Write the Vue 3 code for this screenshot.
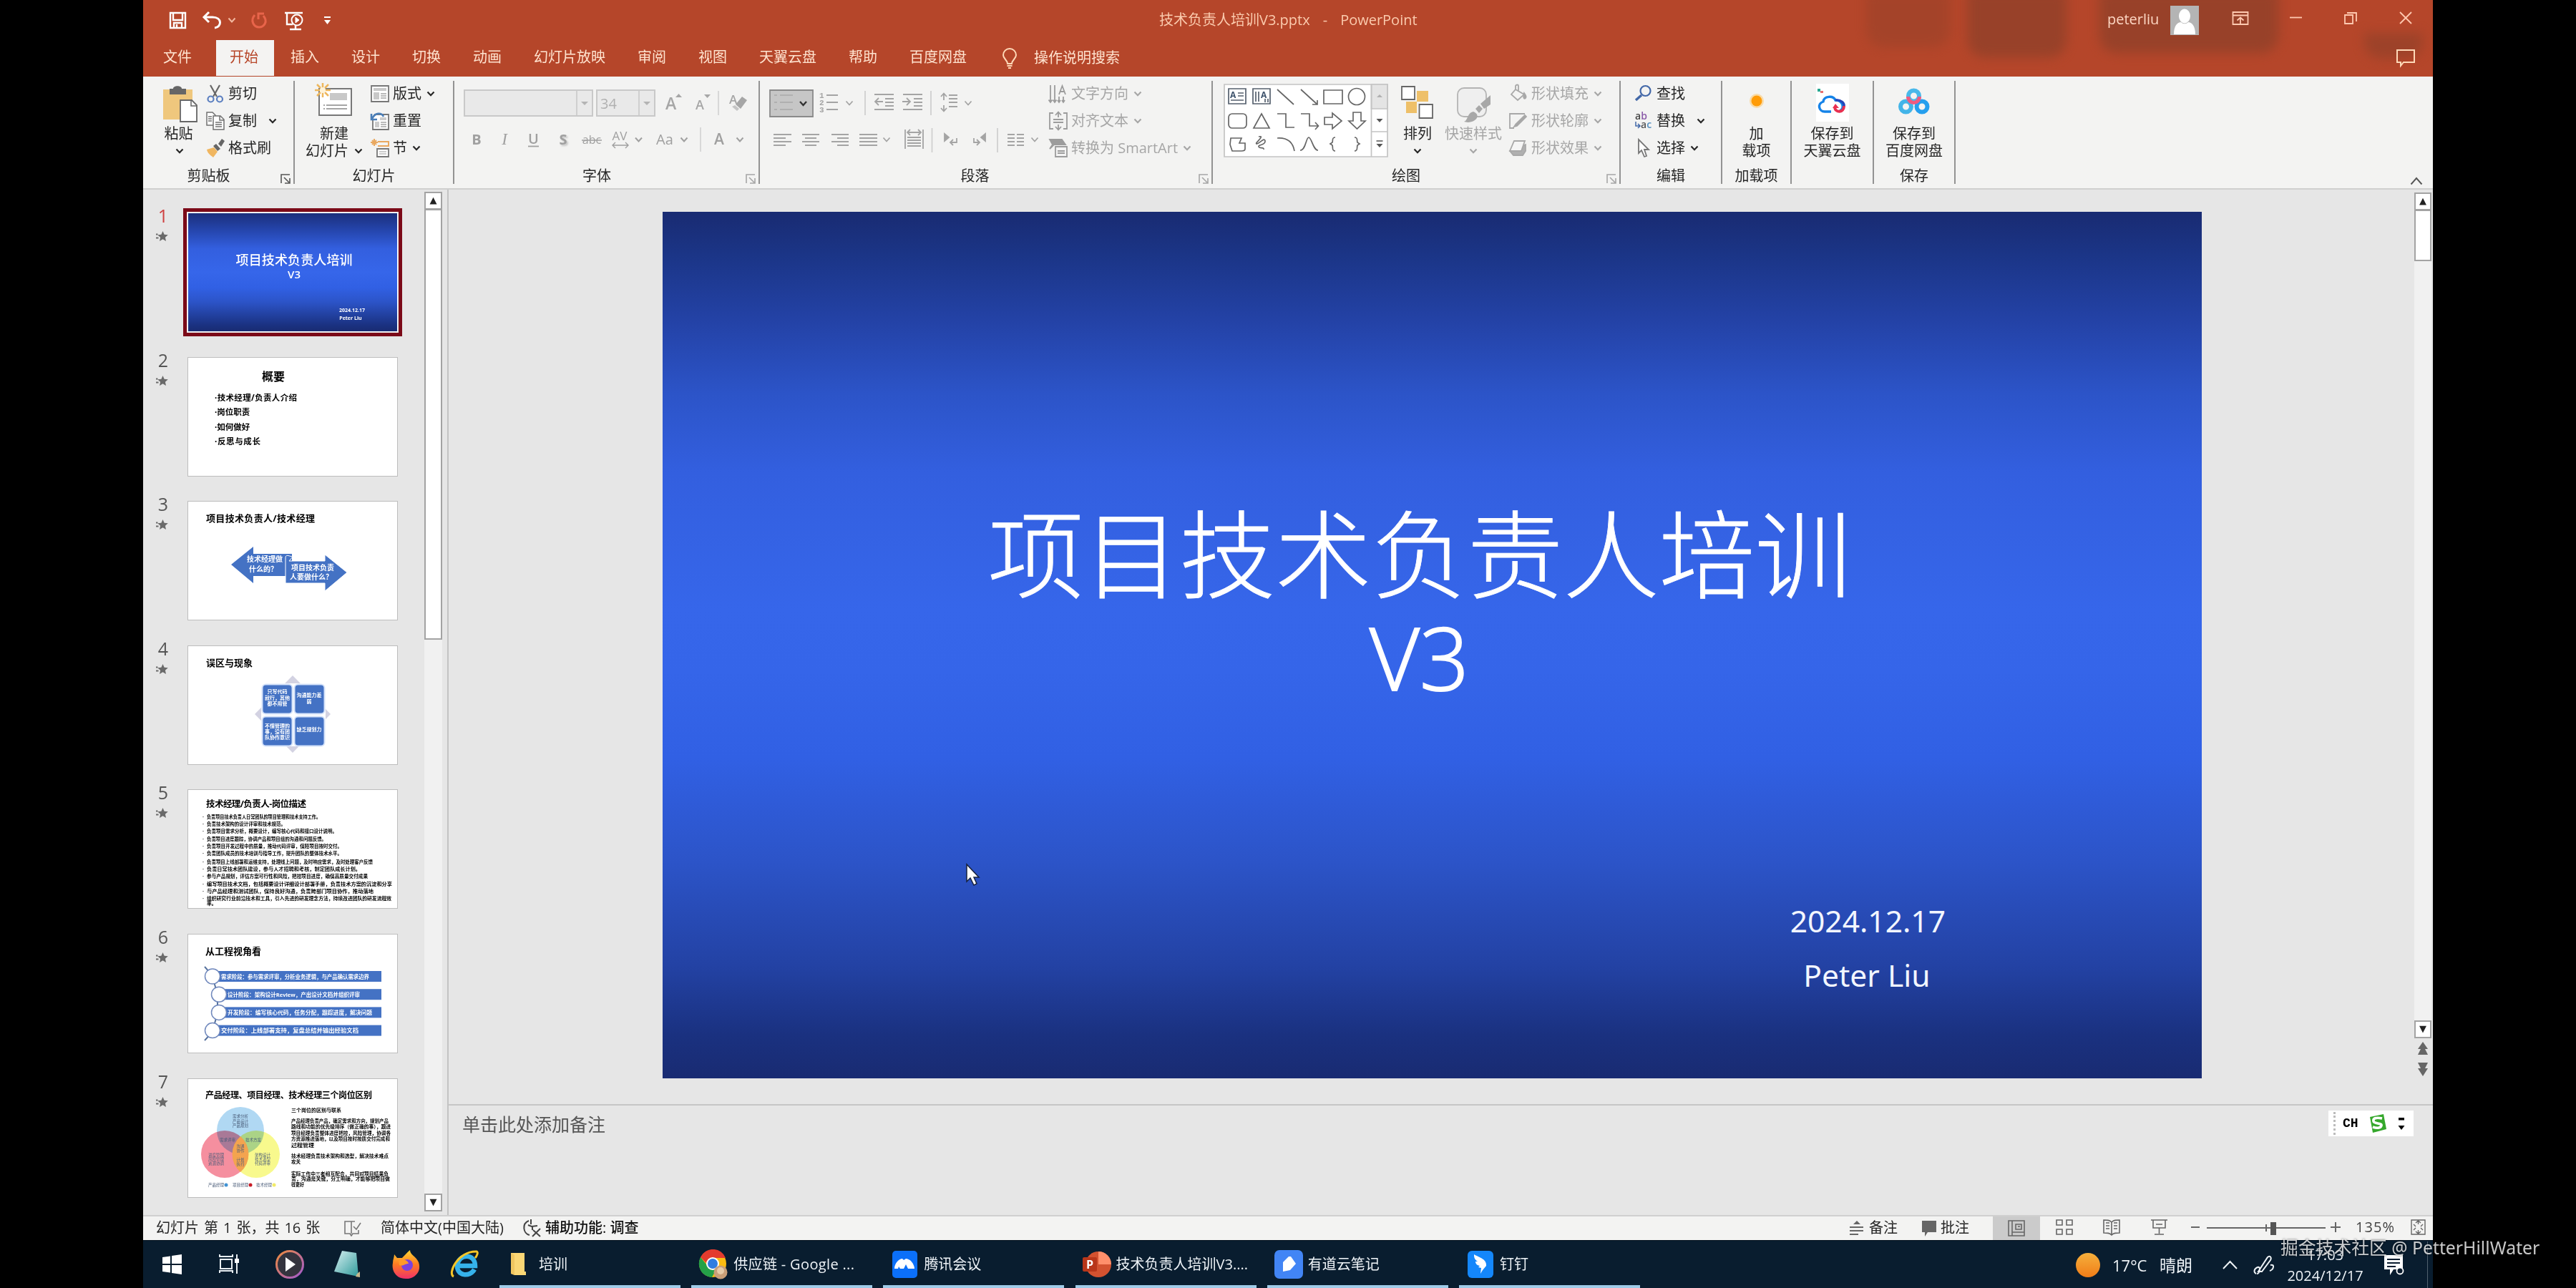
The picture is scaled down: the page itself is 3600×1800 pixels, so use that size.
<script setup>
import { h } from 'vue'

const Chev = () =>
  h('svg', { viewBox: '0 0 12 12', width: 12, height: 12, fill: 'none', stroke: 'currentColor', 'stroke-width': 2.2 }, [
    h('path', { d: 'M1.5 3.5 6 8.2 10.5 3.5' })
  ])
const Launcher = () =>
  h('svg', { viewBox: '0 0 14 14', width: 14, height: 14, fill: 'none', stroke: 'currentColor', 'stroke-width': 1.6 }, [
    h('path', { d: 'M1 13V1h12M5 5l7 7M13 6v7H6' })
  ])

const tabs = ['插入', '设计', '切换', '动画', '幻灯片放映', '审阅', '视图', '天翼云盘', '帮助', '百度网盘']

const duties = [
  ['负责项目技术负责人日常团队的项目管理和技术支持工作。', 159],
  ['负责技术架构的设计评审和技术规范。', 110],
  ['负责项目需求分析，概要设计，编写核心代码和接口设计说明。', 182],
  ['负责项目进度跟踪，协调产品和项目组的沟通和问题反馈。', 167],
  ['负责项目开发过程中的质量，推动代码评审，保障项目按时交付。', 189],
  ['负责团队成员的技术培训与指导工作，提升团队的整体技术水平。', 189],
  ['负责项目上线部署和运维支持，处理线上问题，及时响应需求，及时处理客户反馈', 232],
  ['负责日常技术团队建设，参与人才招聘和考核，制定团队成长计划。', 215],
  ['参与产品规划，评估方案可行性和风险，把控项目进度，确保高质量交付成果', 225],
  ['编写项目技术文档，包括概要设计详细设计部署手册，负责技术方案的沉淀和分享', 259],
  ['与产品经理和测试团队，保持良好沟通，负责跨部门项目协作，推动落地', 233],
  ['组织研究行业前沿技术和工具，引入先进的研发理念方法，持续改进团队的研发流程效', 258]
]
const dutyY = [37.5, 47.5, 58, 69, 79, 89, 100.5, 110.5, 120.5, 132, 142, 152]

const stages = [
  { x: 33, cx: 34, t: '需求阶段：参与需求评审，分析业务逻辑，与产品确认需求边界', w: 207 },
  { x: 43, cx: 43, t: '设计阶段：架构设计Review，产出设计文档并组织评审', w: 185 },
  { x: 43, cx: 43, t: '开发阶段：编写核心代码，任务分配，跟踪进度，解决问题', w: 202 },
  { x: 33, cx: 34, t: '交付阶段：上线部署支持，复盘总结并输出经验文档', w: 192 }
]

const roleText = [
  ['三个岗位的区别与联系', 43, 70], ['产品经理负责产品，确定需求和方向，规划产品', 58, 136],
  ['路线和功能的优先级排序（做正确的事），跟进', 66, 139], ['项目经理负责整体进度把控，风险管理，协调各', 74.5, 139],
  ['方资源推进落地，以及项目按时按质交付完成和', 83, 138], ['过程管理', 91.5, 32],
  ['技术经理负责技术架构和选型，解决技术难点', 106.5, 136], ['攻关', 115, 13],
  ['实际工作中三者相互配合，共同对项目结果负', 131.5, 136], ['责，沟通是关键，分工明确，才能够把项目做', 138.5, 138], ['得更好', 147, 18]
]

const tasks = [
  { k: 'folder', t: '培训' },
  { k: 'chrome', t: '供应链 - Google ...' },
  { k: 'meet', t: '腾讯会议' },
  { k: 'ppt', t: '技术负责人培训V3....' },
  { k: 'note', t: '有道云笔记' },
  { k: 'ding', t: '钉钉' }
]
</script>

<template>
  <div class="screen">
    <div class="window">
      <header class="top">
        <i class="blot b1"></i><i class="blot b2"></i><i class="blot b3"></i><i class="blot b4"></i>
        <div class="titlebar">
          <svg class="quick" width="240" height="50" viewBox="230 4 240 50" fill="none" stroke="#fff" stroke-width="2.4">
            <path d="M238 18h21v21h-21zM242 18v10h13V18M243 39v-7h11v7M247 39v-5" />
            <path d="M292 17l-7 7 7 7M286 24h11c14 0 13 14 3 15" stroke-width="3" />
            <path d="M319.500 25.500l4.500 5 4.500-5" stroke="#f3b9a0" stroke-width="2" />
            <path d="M356 21c-7 8-1 17 6 17s13-8 6-16M369 19h-8v8" stroke="#e8644a" stroke-width="3" />
            <path d="M398 18h25M401 18v16h8M405 41h16M413 36v5" />
            <circle cx="415" cy="28" r="7.500" stroke-width="2" /><path d="M413 24l5 4-5 4z" fill="#fff" stroke-width="1" />
            <path d="M453 24h9" stroke-width="2" /><path d="M453 28h9l-4.500 6z" fill="#fff" stroke="none" />
          </svg>
          <div class="doc"><span>技术负责人培训V3.pptx</span><span>-</span><span>PowerPoint</span></div>
          <span class="user">peterliu</span>
          <svg class="avatar" width="40" height="41" viewBox="0 0 40 41"><path fill="#b4b4b4" d="M0 0h40v41H0z" /><ellipse cx="20" cy="14.500" rx="8" ry="10" fill="#fff" /><path fill="#fff" d="M5 40c0-12 5-17 10-17 3 3 7 3 10 0 5 0 10 5 10 17z" /></svg>
          <svg class="winbtns" width="270" height="40" viewBox="3110 5 270 40" fill="none" stroke="#ffc9b0" stroke-width="1.800">
            <path d="M3120.500 17h21v17h-21zM3120.500 21.500h21M3131 33v-8M3126.500 28.500l4.500-4 4.500 4" />
            <path d="M3200 24.500h17" />
            <path d="M3277 21h11v12h-11zM3280 18h13v12" /><path d="M3354 17l16 16M3370 17l-16 16" />
          </svg>
        </div>
        <nav class="tabs">
          <span class="tab first">文件</span><span class="tab on">开始</span>
          <span v-for="t in tabs" :key="t" class="tab">{{ t }}</span>
          <svg class="bulb" width="22" height="30" viewBox="0 0 22 30" fill="none" stroke="#ffd9b8" stroke-width="2"><path d="M8 22c0-5-6-7-6-12a9 9 0 0 1 18 0c0 5-6 7-6 12zM7.500 25h7M9 28h4" /></svg>
          <span>操作说明搜索</span>
          <svg class="talk" width="28" height="28" viewBox="0 0 28 28" fill="none" stroke="#ffd9b8" stroke-width="2"><path d="M2 3h24v17H11l-4 5v-5H2z" /></svg>
        </nav>
      </header>

      <section class="ribbon">
        <div class="group g-clip">
          <div class="controls">
            <div class="big">
              <svg width="50" height="61" viewBox="226 114 50 61"><path fill="#efc77d" d="M228 125h41v42h-41z" /><path fill="#666" d="M237 124h5c0-5 12-5 12 0h6v8h-23z" /><path fill="#fff" stroke="#666" stroke-width="1.800" d="M252 140h16l7 7v23h-23z" /><path fill="none" stroke="#666" stroke-width="1.500" d="M267 140v8h8" /></svg>
              <span class="shift">粘贴</span><span><Chev /></span>
            </div>
            <div class="stack">
              <div class="cmd"><svg class="ic" viewBox="0 0 26 26" fill="none" stroke-width="2.200"><path stroke="#666" d="M6 1l9 16M19 1l-9 16" /><circle cx="6.500" cy="20.500" r="4" stroke="#5b7fc0" /><circle cx="19" cy="20.500" r="4" stroke="#5b7fc0" /></svg>剪切</div>
              <div class="cmd wide"><svg class="ic" viewBox="0 0 26 26" fill="#fff" stroke="#707070" stroke-width="1.500"><path d="M1 1h8l4 4v14H1z" /><path d="M10 6h10l5 5v14H10zM19 6v6h6M13 15h9M13 18h9M13 21h9M3 7h5M3 10h5M3 13h5" /></svg>复制<Chev /></div>
              <div class="cmd"><svg class="ic" viewBox="0 0 26 26"><path fill="#f0b660" d="M1 15l10-3 5 6-6 8C6 23 2 20 1 15z" /><path fill="#666" d="M10 10l4-3 6 7-4 3zM17 7l5-7 4 3-5 8z" /></svg>格式刷</div>
            </div>
          </div>
          <div class="glabel">剪贴板</div><span class="launch"><Launcher /></span>
        </div>

        <div class="group g-slides">
          <div class="controls">
            <div class="big">
              <svg width="56" height="61" viewBox="439 114 56 61" fill="none"><path fill="#fff" stroke="#777" stroke-width="2" d="M446 124h45v37h-45z" /><path fill="#c8c8c8" d="M461 130h24v10h-24z" /><path stroke="#888" stroke-width="1.500" d="M456 147h29M456 152h29M452 147h2M452 152h2" /><path stroke="#eeb75c" stroke-width="2.500" d="M451 116v7M451 129v7M440 126h7M455 126h7M443 118l5 5M454 129l5 5M459 118l-5 5M448 129l-5 5" /><circle cx="451" cy="126" r="4" fill="#fff3d8" /></svg>
              <span>新建</span><span>幻灯片<Chev class="in" /></span>
            </div>
            <div class="stack">
              <div class="cmd"><svg class="ic" viewBox="0 0 26 26" fill="none" stroke="#777" stroke-width="1.800"><path fill="#fff" d="M1 2h24v22H1z" /><path fill="#c8c8c8" stroke="none" d="M4 5h18v4H4zM4 11h8v10H4z" /><path d="M14 13h8M14 16h8M14 19h8" stroke-width="1.200" /></svg>版式<Chev /></div>
              <div class="cmd"><svg class="ic" viewBox="0 0 26 26" fill="none" stroke="#777" stroke-width="1.800"><path fill="#fff" d="M5 4h20v21H3V12" /><path fill="#ccc" stroke="none" d="M13 8h9v4h-9zM6 14h6v8H6z" /><path d="M14 15h8M14 18h8M14 21h8" stroke-width="1.200" /><path stroke="#4b7fb8" stroke-width="2.600" d="M1 3v8h8M2 10c4-9 13-9 16-3" /></svg>重置</div>
              <div class="cmd"><svg class="ic" viewBox="0 0 26 26" fill="none"><path stroke="#e9a860" stroke-width="2" d="M10 4h15v6H10M5 0v10M0 5h10M2 2l6 6M8 2L2 8" /><path stroke="#777" stroke-width="1.800" fill="#fff" d="M9 14h16v11H9z" /><path stroke="#999" d="M12 18h10M12 21h10" /></svg>节<Chev /></div>
            </div>
          </div>
          <div class="glabel">幻灯片</div>
        </div>

        <div class="group g-font dis">
          <div class="row r1">
            <div class="combo face"><i></i></div>
            <div class="combo size">34<i></i></div>
            <svg width="134" height="38" viewBox="920 125 134 38" fill="#a6a6a6" font-family="Open Sans" font-weight="600"><text x="930" y="153" font-size="23">A</text><path d="M944 136l4.500-5 4.500 5z" /><text x="972" y="153" font-size="18">A</text><path d="M984 132h9l-4.500 5z" /><path d="M1004 127v34" stroke="#cfcfcf" stroke-width="1.500" /><text x="1019" y="145" font-size="17">A</text><path d="M1028 146l9-11 7 5-9 12z" /><path d="M1023 149l4-2 6 5-3 3z" opacity=".6" /></svg>
          </div>
          <svg class="row r2" width="404" height="36" viewBox="648 177 404 36" fill="#a0a0a0" font-family="Open Sans" font-size="20" text-anchor="middle"><text x="666" y="202" font-weight="700">B</text><text x="705" y="202" font-style="italic" font-family="Liberation Serif" font-size="23">I</text><text x="745.500" y="201" font-weight="600">U</text><path d="M738 204.500h15" stroke="#a0a0a0" stroke-width="1.800" /><text x="787" y="202" font-weight="700" class="shadowed">S</text><text x="827" y="201" font-size="16">abc</text><path d="M813 196h28M856 203h22M860 199l-4 4 4 4M874 199l4 4-4 4" stroke="#a0a0a0" stroke-width="1.400" fill="none" /><text x="866" y="196" font-size="17">AV</text><text x="929" y="202" font-size="20">Aa</text><text x="1005" y="202" font-size="21" font-weight="600">A</text><path d="M979 178v34" stroke="#cfcfcf" stroke-width="1.500" /><path d="M888 192.500l4.500 5 4.500-5M951.500 192.500l4.500 5 4.500-5M1029.500 192.500l4.500 5 4.500-5" fill="none" stroke="#a0a0a0" stroke-width="2" /></svg>
          <div class="glabel">字体</div><span class="launch"><Launcher /></span>
        </div>

        <div class="group g-para dis">
          <div class="controls">
            <svg width="405" height="104" viewBox="1061 114 405 104" fill="none" stroke="#a4a4a4" stroke-width="1.800">
              <path fill="#c6c6c6" stroke="#8a8a8a" d="M1076 126h60v37h-60z" /><path stroke="#b0b0b0" d="M1090 133h18M1090 143h18M1090 153h18M1082 133h4M1082 143h4M1082 153h4" /><path stroke="#333" stroke-width="2.400" d="M1118 142l4.500 5 4.500-5" />
              <g font-family="Liberation Mono" font-size="11" font-weight="700" fill="#a4a4a4" stroke="none"><text x="1145" y="137">1</text><text x="1145" y="147">2</text><text x="1145" y="157">3</text></g>
              <path d="M1155 133h16M1155 143h16M1155 153h16M1182.500 141.500l4.500 5 4.500-5M1348.500 141.500l4.500 5 4.500-5" />
              <path stroke="#d0d0d0" d="M1209 127v34M1301 127v34M1302.500 179v34M1394 179v34" />
              <path d="M1222 132h27M1237 138h12M1237 143h12M1237 148h12M1222 153h27M1234 142h-11M1228 137l-5 5 5 5M1262 132h27M1277 138h12M1277 143h12M1277 148h12M1262 153h27M1261 142h11M1267 137l5 5-5 5" />
              <path d="M1319 131v9M1315 135l4-4.500 4 4.500M1319 147v8M1315 151l4 4.500 4-4.500M1326 133h12M1326 138h12M1326 143h12M1326 149h12" />
              <path d="M1081 188h25M1081 193h17M1081 198h25M1081 203h17M1121 188h24M1125 193h16M1121 198h24M1125 203h16M1162 188h24M1170 193h16M1162 198h24M1170 203h16M1201 188h25M1201 193h25M1201 198h25M1201 203h25M1234.500 192.500l4.500 5 4.500-5" />
              <path d="M1265 181v27M1290 181v27M1268 185h19M1272 181l-4 4 4 4M1283 181l4 4-4 4M1268 192h19M1268 196h19M1268 200h19M1268 204h19" />
              <path d="M1320 187l6 5-6 5z" fill="#a4a4a4" /><path d="M1337 193v6h-9M1332 195l-4 4 4 4M1361 193v6h8M1365 195l4 4-4 4" /><path d="M1377 187l-6 5 6 5z" fill="#a4a4a4" />
              <path d="M1408 188h10M1408 193h10M1408 198h10M1408 203h10M1421 188h10M1421 193h10M1421 198h10M1421 203h10M1441.500 192.500l4.500 5 4.500-5" />
            </svg>
            <div class="stack">
              <div class="cmd"><svg class="ic" viewBox="0 0 26 26" fill="none" stroke="#9c9c9c" stroke-width="1.800"><path d="M2 1v24M8 1v24M14 17v8M20 17v8M-.500 21.500L2 25l2.500-3.500M5.500 21.500L8 25l2.500-3.500M12 22l2 3 2-3M18 22l2 3 2-3M14 14l4.500-12L23 14M15.500 10h6" /></svg>文字方向<Chev /></div>
              <div class="cmd"><svg class="ic" viewBox="0 0 26 26" fill="none" stroke="#9c9c9c" stroke-width="1.800"><path d="M6 2H1v22h5M20 2h5v22h-5M13 8V1M9 5l4-4.500L17 5M13 18v7M9 21l4 4.500 4-4.500M6 11h14M6 15h14" /></svg>对齐文本<Chev /></div>
              <div class="cmd"><svg class="ic" viewBox="0 0 26 26" fill="none" stroke="#9c9c9c" stroke-width="1.800"><path fill="#9c9c9c" d="M1 1h17l5 7H7L1 14l4-6z" /><path fill="#f3f3f3" d="M9 11h16v14H9z" /><path d="M12 17h10M12 20h10" /></svg>转换为 SmartArt<Chev /></div>
            </div>
          </div>
          <div class="glabel">段落</div><span class="launch"><Launcher /></span>
        </div>

        <div class="group g-draw">
          <div class="controls">
            <svg class="gallery" width="230" height="103" viewBox="1710 117 230 103" fill="none" stroke="#666" stroke-width="1.700">
              <path fill="#fff" stroke="#c4c4c4" d="M1711 118h228v101h-228z" /><path fill="#e4e4e4" stroke="#c4c4c4" d="M1916.500 118h22.500v34h-22.500z" /><path stroke="#c4c4c4" d="M1916.500 118v101M1916.500 184h22.500" />
              <path fill="#b0b0b0" stroke="none" d="M1924 136l4-4 4 4z" /><path fill="#555" stroke="none" d="M1923.500 166h9l-4.500 5zM1923.500 201h9l-4.500 5z" /><path d="M1923.500 197h9" />
              <path stroke="#55606e" d="M1717 124h24v21h-24zM1730 130h8M1730 134h8M1720 140h18M1751 124h24v21h-24zM1755 128v14M1759 128v14M1768 138v5M1772 138v5" />
              <g font-family="Open Sans" font-size="12" font-weight="700" fill="#3d526b" stroke="none"><text x="1719" y="137">A</text><text x="1762" y="137">A</text></g>
              <path d="M1785 125l23 21M1818 125l23 21M1841 140v6h-7" /><path d="M1850 126h26v19h-26z" /><circle cx="1896" cy="135" r="11.500" />
              <rect x="1717" y="159" width="25" height="20" rx="5" /><path d="M1763 159l11 20h-22zM1785 159h12v19h12M1818 159h12v17h12M1838 171l4.500 5-4.500 5" />
              <path d="M1851 164h11v-6l13 11-13 11v-6h-11zM1891 157h11v12h6l-11.500 11-11.500-11h6z" />
              <path d="M1720 193h15l-3 7h8v8c0 3-3 3-5 3h-13l-3-9zM1759 191c10-2-6 9-3 10s11-10 12-4-10 5-9 8 8 0 7 4" /><path d="M1785 193c15-1 22 7 24 18M1817 210c8 0 8-18 12-18s6 18 13 18M1866 192c-5 0-3 4-4 7l-3 2 3 2c1 3-1 8 4 8M1893 192c5 0 3 4 4 7l3 2-3 2c-1 3 1 8-4 8" />
            </svg>
            <div class="big arrange">
              <svg width="50" height="61" viewBox="1955 114 50 61"><path fill="#eec069" d="M1979 127h16v15h-16zM1964 142h15v16h-15z" /><path fill="#fff" stroke="#666" stroke-width="1.800" d="M1958 121h18v18h-18zM1982.500 146h18.500v19h-18.500z" /></svg>
              <span>排列</span><span><Chev /></span>
            </div>
            <div class="big quickstyle dis">
              <svg width="54" height="61" viewBox="2034 114 54 61"><rect x="2039" y="123" width="40" height="40" rx="9" fill="#efefef" stroke="#b4b4b4" stroke-width="1.800" /><path fill="#a8a8a8" d="M2048 170c6-2 4-12 13-14 6 2 8 8 2 12s-12 3-15 2zM2064 152l5-5 5 5-5 6zM2071 145l14-12v13l-9 6z" /></svg>
              <span>快速样式</span><span><Chev /></span>
            </div>
            <div class="stack dis">
              <div class="cmd"><svg class="ic" viewBox="0 0 26 26" fill="none" stroke="#a8a8a8" stroke-width="1.800"><path d="M9 7l12 7-9 8-9-8zM9 7V2c1-2 4-2 4 0v8" /><path fill="#a8a8a8" d="M21 12c2 3 4 5 2 7s-4 0-2-7z" /></svg>形状填充<Chev /></div>
              <div class="cmd"><svg class="ic" viewBox="0 0 26 26" fill="none" stroke="#a8a8a8" stroke-width="1.800"><path d="M22 3H1v20h6" /><path fill="#a8a8a8" d="M9 18L22 5l2 2-13 13-4 1z" /></svg>形状轮廓<Chev /></div>
              <div class="cmd"><svg class="ic" viewBox="0 0 26 26" fill="none" stroke="#a8a8a8" stroke-width="1.800"><path fill="#b0b0b0" d="M1 17l5 6h13l4-6V8z" /><path fill="#f5f5f5" d="M7 3h15l-5 14H1z" /></svg>形状效果<Chev /></div>
            </div>
          </div>
          <div class="glabel">绘图</div><span class="launch pale"><Launcher /></span>
        </div>

        <div class="group g-edit">
          <div class="controls">
            <div class="stack">
              <div class="cmd"><svg class="ic" viewBox="0 0 26 26" fill="none" stroke="#4368a8" stroke-width="2.200"><circle cx="15.500" cy="9" r="7" /><path stroke-width="3.500" d="M10 15l-8 7" /></svg>查找</div>
              <div class="cmd wide"><svg class="ic" viewBox="0 0 26 26" font-family="Open Sans" font-size="14" font-weight="600"><text x="1" y="11" fill="#444">a<tspan fill="#8a5aa8">b</tspan></text><text x="9" y="23" fill="#555">a<tspan fill="#5590c0">c</tspan></text><path d="M2 14v6h5M5 17l3 3-3 3" fill="none" stroke="#4368a8" stroke-width="1.500" /></svg>替换<Chev /></div>
              <div class="cmd"><svg class="ic" viewBox="0 0 26 26" fill="#fff" stroke="#777" stroke-width="1.800"><path d="M6 1v19l4-4 4 9 3-1-3-9h6z" /></svg>选择<Chev /></div>
            </div>
          </div>
          <div class="glabel">编辑</div>
        </div>

        <div class="group g-add">
          <div class="controls"><div class="big"><svg width="50" height="61" viewBox="-25 -27 50 61"><circle r="10" fill="#ffc45e" opacity=".5" /><circle r="7.500" fill="#ff9c08" /></svg><span>加</span><span>载项</span></div></div>
          <div class="glabel">加载项</div>
        </div>
        <div class="group g-tian">
          <div class="controls"><div class="big"><svg width="50" height="61" viewBox="2536 114 50 61" fill="none"><path fill="#fff" d="M2538 117h46v53h-46z" /><path stroke="#1583e8" stroke-width="3.400" d="M2559 156h-9c-8 0-11-11-2-14 1-8 14-9 17-2 11 0 13 12 6 15" /><path stroke="#2646b8" stroke-width="3.400" d="M2565 140c8-1 13 4 12 9" /><path stroke="#e83050" stroke-width="4" d="M2577 148c0 10-12 10-13 2" /><path fill="#e83050" d="M2561 151l4-6 5 6z" /><path fill="#28a890" d="M2540 124h4v4h-4z" /><path fill="#e87070" d="M2544 127h4v3h-4z" /></svg><span>保存到</span><span>天翼云盘</span></div></div>
        </div>
        <div class="group g-baidu">
          <div class="controls"><div class="big"><svg width="50" height="61" viewBox="2651 114 50 61" fill="none" stroke-width="6"><circle cx="2675.500" cy="134" r="7.500" stroke="#48b8ea" /><circle cx="2664.500" cy="149" r="7.500" stroke="#42b4e8" /><circle cx="2687" cy="149" r="7.500" stroke="#259fee" /><path stroke="#ef5a80" stroke-width="5" d="M2667.500 135c0 5 4 8.500 8 8.500s8-3.500 8-8.500" /></svg><span>保存到</span><span>百度网盘</span></div></div>
          <div class="glabel">保存</div>
        </div>
        <svg class="collapse" width="18" height="12" viewBox="0 0 18 12" fill="none" stroke="#555" stroke-width="2"><path d="M1.500 10.500L9 2l7.500 8.500" /></svg>
      </section>

      <main class="body">
        <aside class="side">
          <div class="slides">
            <div v-for="n in 7" :key="n" class="item" :class="{ cur: n === 1 }">
              <div class="num"><b>{{ n }}</b><svg width="18" height="16" viewBox="0 0 18 16" fill="#6a6a6a"><path d="M10.500 1l2.100 4.800 5.200.500-3.900 3.500 1.100 5.100-4.500-2.700L6 14.900l1.100-5.100-3.900-3.500 5.200-.500zM1 4.500h2.500v2H1zM1 9.500h3.500v2H1z" /></svg></div>
              <div class="thumb">
                <svg viewBox="0 0 292 165" width="292" height="165" class="t">
                  <g v-if="n === 1" fill="#fff" text-anchor="middle"><text x="148" y="72" font-size="18" font-weight="500" textLength="163">项目技术负责人培训</text><text x="148" y="91" font-size="15" font-weight="600">V3</text><text x="229" y="138" font-size="7" font-weight="700">2024.12.17</text><text x="227" y="149" font-size="7" font-weight="700">Peter Liu</text></g>
                  <g v-else-if="n === 2" font-weight="700"><text x="103" y="32" font-size="16">概要</text><g font-size="11.500"><text x="37" y="59.500" textLength="115">·技术经理/负责人介绍</text><text x="37" y="80">·岗位职责</text><text x="37" y="101">·如何做好</text><text x="37" y="121" textLength="64">·反思与成长</text></g></g>
                  <g v-else-if="n === 3"><text x="25" y="27.500" font-size="13" font-weight="700" textLength="152">项目技术负责人/技术经理</text><path fill="#4472c4" d="M60 88l31-25v10h54v31H91v10z" /><path fill="#4472c4" stroke="#fff" stroke-width="1" d="M136 79c0-6 4-3 10-2l-5 6h50V74l31 25-31 26v-11h-55z" /><g fill="#fff" font-weight="700" font-size="10" text-anchor="middle"><text x="107" y="84">技术经理做</text><text x="105" y="98">什么的？</text><text x="174" y="96">项目技术负责</text><text x="172" y="109">人要做什么？</text></g></g>
                  <g v-else-if="n === 4"><text x="25" y="27.500" font-size="13" font-weight="700">误区与现象</text><path fill="#d3d2e2" d="M146 41l53 54-53 54-53-54z" /><path fill="#fff" d="M118 52h58v18h16v50h-16v20h-58v-20h-16V70h16z" /><g fill="#4472c4" stroke="#d4e2fa" stroke-width="2"><rect x="103.500" y="53.500" width="42" height="41" rx="5" /><rect x="148.500" y="53.500" width="42" height="41" rx="5" /><rect x="103.500" y="98.500" width="42" height="41" rx="5" /><rect x="148.500" y="98.500" width="42" height="41" rx="5" /></g><g fill="#fff" font-weight="700" font-size="7" text-anchor="middle"><text x="124.500" y="66">只写代码</text><text x="124.500" y="74.500">就行，其他</text><text x="124.500" y="83">都不用管</text><text x="169" y="71">沟通能力差</text><text x="169" y="80">弱</text><text x="124.500" y="114">不懂管理的</text><text x="124.500" y="122">事，没有团</text><text x="124.500" y="130">队协作意识</text><text x="169" y="119">缺乏规划力</text></g></g>
                  <g v-else-if="n === 5"><text x="25" y="24" font-size="12.500" font-weight="700" textLength="140">技术经理/负责人-岗位描述</text><g font-size="6.800" font-weight="700"><g v-for="(d, i) in duties" :key="i"><text x="20" :y="dutyY[i] + 2">·</text><text x="26" :y="dutyY[i] + 2" :textLength="d[1]" lengthAdjust="spacingAndGlyphs">{{ d[0] }}</text></g><text x="26" y="161">率。</text></g></g>
                  <g v-else-if="n === 6"><text x="24" y="28" font-size="13" font-weight="700">从工程视角看</text><path d="M23 45c24 24 24 80 0 103" fill="none" stroke="#54709c" stroke-width="2" /><g v-for="(s, i) in stages" :key="i"><rect :x="s.x" :y="i * 25.200 + 51" :width="270 - s.x" height="15" fill="#4472c4" /><circle :cx="s.cx" :cy="i * 25.200 + 58.500" r="10.500" fill="#fff" stroke="#7189bd" stroke-width="1.500" /><text :x="s.cx + 12" :y="i * 25.200 + 61.500" font-size="7.500" font-weight="700" fill="#fff" :textLength="s.w" lengthAdjust="spacingAndGlyphs">{{ s.t }}</text></g></g>
                  <g v-else><text x="24" y="27" font-size="12" font-weight="700" textLength="233">产品经理、项目经理、技术经理三个岗位区别</text>
                    <g class="venn"><circle cx="73" cy="72" r="33" fill="#b0d8f3" /><circle cx="51" cy="105" r="33" fill="#f58f9f" /><circle cx="95" cy="105" r="33" fill="#f8f98d" /></g>
                    <path d="M73 80a33 33 0 0 1 0 50a33 33 0 0 1 0-50z" fill="#f3a44f" />
                    <g font-size="5.500" fill="#4b5d79" text-anchor="middle"><text x="73" y="54">需求分析</text><text x="73" y="61">产品设计</text><text x="73" y="67">产品规划</text><text x="55" y="87">需求评审</text><text x="91" y="87">技术方案</text><text x="73" y="96">沟通</text><text x="73" y="102">协作</text><text x="73" y="115">计划</text><text x="73" y="121">执行</text><text x="39" y="108">进度管理</text><text x="39" y="114">风险管理</text><text x="39" y="120">资源协调</text><text x="104" y="108">架构设计</text><text x="104" y="114">技术选型</text><text x="104" y="120">代码评审</text><text x="39" y="150">产品经理</text><text x="73" y="150">项目经理</text><text x="106" y="150">技术经理</text></g>
                    <circle cx="53" cy="148" r="2.500" fill="#4193d4" /><circle cx="87" cy="148" r="2.500" fill="#c81e28" /><circle cx="120" cy="148" r="2.500" fill="#f2ec6a" />
                    <g font-size="6.800" font-weight="700"><text v-for="(r, i) in roleText" :key="i" x="144" :y="r[1] + 3" :textLength="r[2]" lengthAdjust="spacingAndGlyphs">{{ r[0] }}</text></g>
                  </g>
                </svg>
              </div>
            </div>
          </div>
          <div class="scroll left"><div class="sbtn">▲</div><div class="sthumb"></div><div class="grow"></div><div class="sbtn">▼</div></div>
        </aside>
        <div class="work">
          <div class="canvas">
            <div class="slide">
              <h1>项目技术负责人培训<br /><em>V3</em></h1>
              <div class="by"><span>2024.12.17</span><span>Peter Liu</span></div>
              <svg class="cursor" width="22" height="32" viewBox="0 0 22 32"><path d="M2 2v24l5-5 5 10 4-2-4-9h7z" fill="#fff" stroke="#18223c" stroke-width="1.500" /></svg>
            </div>
            <div class="scroll right"><div class="sbtn">▲</div><div class="sthumb"></div><div class="grow"></div><div class="sbtn">▼</div>
              <svg width="24" height="56" viewBox="0 0 24 56" fill="#666"><path d="M12 5l7 10h-4l4 8H5l4-8H5zM5 34h14l-4 8h4l-7 11-7-11h4z" /></svg>
            </div>
          </div>
          <div class="notes"><span>单击此处添加备注</span>
            <div class="ime"><i></i><b>CH</b><svg width="28" height="28" viewBox="0 0 28 28"><path fill="#35a82c" d="M3 5l19-4 4 21-19 5z" /><path d="M20 7c-9-2-13 0-12 4s12 2 11 6-7 4-12 2" fill="none" stroke="#fff" stroke-width="3.600" /></svg><svg width="12" height="20" viewBox="0 0 12 20"><path d="M2 2h8v3.500H2zM1.500 13h9l-4.500 6z" /></svg></div>
          </div>
        </div>
      </main>

      <footer class="status">
        <span class="pg">幻灯片 第 1 张，共 16 张</span>
        <svg class="st1" width="25" height="24" viewBox="0 0 25 24" fill="none" stroke="#777" stroke-width="1.600"><path d="M11 20V3H2v17h7l2 3 2-3h8v-5M11 3h5M14 10l4 4 6-9" /></svg>
        <span class="lang">简体中文(中国大陆)</span>
        <svg class="st2" width="30" height="26" viewBox="0 0 30 26" fill="none" stroke="#444" stroke-width="2"><path d="M9 3C-1 7 1 21 10 23M12 1v7M8 9l5 2 8-1M14 11l0 5M15 16l10 9M25 14l-11 11" /></svg>
        <span class="acc">辅助功能: 调查</span>
        <div class="grow"></div>
        <svg class="st3" width="20" height="22" viewBox="0 0 20 22" fill="none" stroke="#666" stroke-width="1.800"><path fill="#666" stroke="none" d="M5 6l5-5 5 5z" /><path d="M0 10h19M0 15h19M0 20h12" /></svg><span class="s3t">备注</span>
        <svg class="st4" width="24" height="23" viewBox="0 0 24 23" fill="#666"><path d="M2 1h20v16H10l-4 6v-6H2z" /></svg><span class="s4t">批注</span>
        <div class="view"><svg width="24" height="23" viewBox="0 0 24 23" fill="none" stroke="#666" stroke-width="1.600"><path d="M1 1h22v21H1zM6 1v21M6 17h17M11 6h8v7h-8zM14 9h3" /></svg></div>
        <svg class="modes" width="540" height="35" viewBox="2860 1698 540 35" fill="none" stroke="#666" stroke-width="1.600"><path d="M2874 1704h8v7h-8zM2888 1704h8v7h-8zM2874 1717h8v7h-8zM2888 1717h8v7h-8z" /><path d="M2951 1706v19M2940 1704c5 0 8 0 11 3 3-3 6-3 11-3v18c-5 0-8 0-11 3-3-3-6-3-11-3zM2943 1708h5M2943 1712h5M2943 1716h5M2954 1708h5M2954 1712h5M2954 1716h5" /><path d="M3006 1704h23M3009 1704v11h17v-11M3017.500 1715v8M3011 1724h13M3013 1710h9" /><path d="M3062 1714h12M3084 1715h166M3167 1710v10M3257 1714h14M3264 1707v14" stroke-width="2" /><path fill="#555" stroke="none" d="M3173 1707h8v18h-8z" /><text x="3292" y="1721" fill="#444" stroke="none" font-size="20" textLength="54">135%</text><path d="M3370 1704h19v20h-19zM3379.500 1704v6M3379.500 1718v6M3376 1708l3.500-3 3.500 3M3376 1720l3.500 3 3.500-3M3373 1710l3 3M3386 1710l-3 3M3373 1718l3-3M3386 1718l-3-3" stroke-width="1.400" /></svg>
      </footer>

      <footer class="taskbar">
        <svg class="pins" width="498" height="60" viewBox="200 1737 498 60" fill="none">
          <defs><linearGradient id="fx" x1="0" y1="0" x2="0" y2="1"><stop offset="0" stop-color="#ffd733" /><stop offset=".5" stop-color="#ff7a22" /><stop offset="1" stop-color="#f0306a" /></linearGradient><linearGradient id="wm" x1="0" y1="0" x2="1" y2="1"><stop offset="0" stop-color="#ef8b3c" /><stop offset="1" stop-color="#a05ad0" /></linearGradient><linearGradient id="np" x1="0" y1="0" x2="1" y2="1"><stop offset="0" stop-color="#d9f0f2" /><stop offset="1" stop-color="#2d9a9a" /></linearGradient></defs>
          <path fill="#fff" d="M227 1757l11-1.500v10.500h-11zM240 1755l14-2v13h-14zM227 1768h11v10.500l-11-1.500zM240 1768h14v13l-14-2z" />
          <path stroke="#e8eef2" stroke-width="2" d="M307 1753v3h18v-3M308 1760h16v13h-16zM307 1779v-3h18v3M331 1753v27" /><path fill="#fff" d="M328 1759h6v6h-6z" />
          <circle cx="405" cy="1767" r="18.500" fill="#34343e" stroke="url(#wm)" stroke-width="3" /><path fill="#fff" d="M399 1757l14 10-14 10z" />
          <path fill="url(#np)" d="M478 1748l20 3 3 33-34-7z" /><path fill="#c7b78a" d="M499 1780l4-3v8l-6-1z" />
          <path fill="url(#fx)" d="M551 1753l4 5 7 0c3-3 6-7 11-11 0 7 8 8 12 17 5 15-8 24-18 23-15 0-20-13-18-22 0-5 2-8 2-12z" /><circle cx="569" cy="1768" r="8" fill="#7a42e0" /><path fill="#ff9a2a" d="M557 1762c7-4 13 0 14 4-6 0-7 4-13 2z" />
          <path stroke="#35b2ea" stroke-width="6.500" d="M639 1769h25c0-18-23-17-25-1-1 16 18 17 24 6" /><path stroke="#f5c527" stroke-width="3" d="M634 1784c-9-4 6-36 32-35 3 1 0 7-2 9" />
        </svg>
        <div class="task" v-for="t in tasks" :key="t.k" :class="t.k">
          <svg v-if="t.k === 'folder'" width="40" height="40" viewBox="0 0 40 40"><path fill="#fbd775" d="M9 4h19v26h2v5H14l-5-2z" /><path fill="#e8b64c" d="M14 35l-5-2V4l5 3z" opacity=".5" /></svg>
          <svg v-else-if="t.k === 'chrome'" width="42" height="42" viewBox="0 0 42 42"><circle cx="20" cy="20" r="19" fill="#fbbc12" /><path fill="#e33b2e" d="M3 11a19 19 0 0 1 35 1H20c-5 0-8 4-8 8z" /><path fill="#24a148" d="M3 11a19 19 0 0 0 16 28l7-13c-6 4-12 1-14-4z" /><circle cx="20" cy="20" r="9" fill="#fff" /><circle cx="20" cy="20" r="7" fill="#2f7de0" /><circle cx="31" cy="32" r="9.500" fill="#c99f78" /><circle cx="31" cy="30" r="5" fill="#e6cba8" /></svg>
          <svg v-else-if="t.k === 'meet'" width="40" height="40" viewBox="0 0 40 40"><rect x="3" y="1" width="35" height="38" rx="5" fill="#0b70fa" /><path fill="#fff" d="M6 26c0-8 7-14 11-14l2 2 3-2c6 0 12 8 12 14h-9l-3-6-3 6h-5l-2-3-1 3z" /></svg>
          <svg v-else-if="t.k === 'ppt'" width="40" height="40" viewBox="0 0 40 40"><circle cx="22" cy="20" r="18" fill="#d35230" /><path fill="#ff8f6b" d="M22 2a18 18 0 0 1 18 18H22z" /><rect y="10" width="20" height="20" rx="2" fill="#b8361a" /><text x="5" y="26" font-size="16" font-weight="700" fill="#fff">P</text></svg>
          <svg v-else-if="t.k === 'note'" width="40" height="40" viewBox="0 0 40 40"><rect width="40" height="40" rx="7" fill="#4285f5" /><path fill="#fff" d="M12 30V17l8-8h3l7 10-8 9z" /></svg>
          <svg v-else width="40" height="40" viewBox="0 0 40 40"><rect x="2" y="1" width="36" height="38" rx="6" fill="#1487fb" /><path fill="#fff" d="M11 6c6 4 18 6 17 16l-5 6-3 5 1-8-4-1 2-2c-5-1-6-4-6-6l3 0c-5-3-5-7-5-10z" /></svg>
          <span>{{ t.t }}</span>
        </div>
        <div class="tray">
          <i class="sun"></i><span class="temp">17°C</span><span class="sunny">晴朗</span>
          <svg width="90" height="40" viewBox="3100 1747 90 40" fill="none" stroke="#eef3f6" stroke-width="2"><path d="M3107 1772l9.500-10 9.500 10M3153 1779c-4-2-3-7 2-9 5-2 3 10-1 9M3156 1776l13-20c3-3 6 0 4 4l-12 16zM3173 1767c6-2 5 6-1 8" /></svg>
          <div class="clock"><span>17:03</span><span>2024/12/17</span></div>
          <svg class="bell" width="32" height="32" viewBox="3329 1751 32 32"><path fill="#fff" d="M3331 1753h26v20h-13l-5 8v-8h-8z" /><path stroke="#0a1c2e" stroke-width="1.800" d="M3335 1759h18M3335 1764h18M3335 1769h12" /><circle cx="3353" cy="1775" r="4.500" fill="#0a1c2e" stroke="#fff" stroke-width="1.800" /></svg>
          <i class="peek"></i>
        </div>
      </footer>
    </div>
    <div class="mark">掘金技术社区 @ PetterHillWater</div>
  </div>
</template>

<style>
body { margin: 0; background: #000; overflow: hidden; }
</style>
<style scoped>
* { box-sizing: border-box; }
.screen { position: relative; width: 3600px; height: 1800px; background: #000; padding: 0 200px; overflow: hidden; font: 20px/24px "Open Sans", "Noto Sans CJK SC", sans-serif; color: #262626; white-space: nowrap; }
.screen svg { flex: none; display: block; }
.window { width: 3200px; height: 1800px; display: flex; flex-direction: column; background: #e6e6e6; }
.grow { flex: 1; }

.top { position: relative; height: 107px; background: #b5462a; flex: none; overflow: hidden; color: #ffe3cf; }
.blot { position: absolute; background: #8d4029; opacity: .72; filter: blur(8px); border-radius: 0 0 24px 24px; }
.b1 { left: 2408px; top: -14px; width: 118px; height: 80px; opacity: .4; }
.b2 { left: 2550px; top: -14px; width: 138px; height: 94px; }
.b3 { left: 2734px; top: -14px; width: 250px; height: 88px; }
.b4 { left: 3104px; top: 46px; width: 82px; height: 36px; opacity: .6; }
.titlebar { position: relative; display: flex; height: 57px; align-items: flex-start; }
.quick { margin: 4px 0 0 30px; }
.doc { display: flex; gap: 18px; width: 362px; margin: 16px 0 0 1150px; color: #fbcbae; }
.user { width: 88px; margin: 15px 0 0 963px; color: #fdd6c2; font-size: 20px; }
.avatar { margin-top: 8px; }
.winbtns { margin: 5px 0 0 37px; }
.tabs { position: relative; display: flex; height: 50px; align-items: center; padding-bottom: 3px; line-height: 47px; }
.tab { height: 50px; padding: 0 22px 0 23px; }
.tab.first { padding: 0 34px 0 28px; }
.tab.on { background: #f4f3f2; color: #b7472a; width: 81px; padding: 0 0 0 19px; }
.bulb { margin: 2px 23px 0 27px; }
.talk { margin: 0 24px 0 auto; }

.ribbon { position: relative; height: 158px; flex: none; display: flex; background: #f3f3f2; border-bottom: 2px solid #cfcfcf; }
.group { position: relative; height: 156px; flex: none; }
.group::after { content: ""; position: absolute; right: -1px; top: 6px; width: 2px; height: 144px; background: #939393; }
.g-clip { width: 211px; } .g-slides { width: 223px; } .g-font { width: 427px; } .g-para { width: 633px; }
.g-draw { width: 570px; } .g-edit { width: 142px; } .g-add { width: 97px; } .g-tian { width: 115px; } .g-baidu { width: 114px; }
.controls { display: flex; height: 125px; align-items: flex-start; }
.g-font { display: flex; flex-direction: column; }
.glabel { height: 28px; line-height: 28px; text-align: center; color: #262626; }
.g-clip .glabel { padding-right: 28px; } .g-font .glabel { padding-right: 27px; } .g-para .glabel { padding-right: 30px; } .g-draw .glabel { padding-right: 28px; }
.launch { position: absolute; right: 5px; top: 136px; color: #555; }
.dis { color: #a6a6a6; }
.dis .launch, .launch.pale { color: #a6a6a6; }
.shadowed { filter: drop-shadow(2px 2px 1px #c4c4c4); }
.big { display: flex; flex-direction: column; align-items: center; padding-top: 7px; }
.big span { height: 24px; display: flex; align-items: center; gap: 8px; }
.g-clip .big { width: 60px; margin-left: 21px; }
.g-clip .shift { margin-right: 3px; }
.g-clip .stack { margin-left: 7px; }
.g-slides .big { width: 90px; margin-left: 11px; }
.g-slides .stack { margin-left: 6px; }
.arrange { width: 60px; margin-left: 11px; }
.quickstyle { width: 88px; margin-left: 4px; }
.g-draw .stack { margin-left: 6px; }
.g-edit .stack { margin-left: 20px; }
.g-add .big, .g-tian .big, .g-baidu .big { width: 100%; }
.gallery { margin: 10px 0 0 16px; }
.g-para .controls > svg { margin-top: 7px; }
.stack { padding-top: 5px; }
.cmd { height: 38px; display: flex; align-items: center; }
.cmd > svg { margin-left: 7px; }
.cmd > svg.ic { width: 26px; height: 26px; margin: 0 5px 0 0; overflow: visible; }
.cmd.wide > svg:last-child { margin-left: 16px; }
.row.r1 { display: flex; margin: 18px 0 0 14px; }
.row.r2 { margin: 14px 0 19px 14px; }
.combo { position: relative; height: 38px; border: 2px solid #c9c9c9; background: #e9e9e9; line-height: 35px; padding-left: 4px; margin-right: 4px; color: #b0b0b0; }
.combo i { position: absolute; right: 0; top: 0; bottom: 0; width: 22px; border-left: 2px solid #cfcfcf; }
.combo i::after { content: ""; position: absolute; left: 5px; top: 15px; border: 5px solid transparent; border-top-color: #b4b4b4; }
.face { width: 181px; } .size { width: 83px; }
.collapse { position: absolute; right: 14px; top: 140px; }

.body { height: 1433px; flex: none; display: flex; }
.side { width: 427px; display: flex; border-right: 2px solid #c3c3c3; }
.slides { width: 393px; height: 1433px; overflow: hidden; padding-top: 32px; }
.item { height: 201.6px; display: flex; }
.num { width: 56px; display: flex; flex-direction: column; align-items: center; margin-top: -9px; color: #555; }
.num b { font: 400 25px/26px "Open Sans"; margin-bottom: 8px; }
.num svg { margin-left: -4px; }
.cur .num { color: #cf4040; }
.thumb { position: relative; width: 294px; height: 167px; margin-left: 6px; background: #fff; border: 1px solid #bdbdbd; }
.cur .thumb { background: linear-gradient(#1b2f7c, #2443a8 13%, #335fdf 30%, #3666ea 50%, #3160e4 63%, #2c54c8 75%, #1a3180 95%, #192b72); outline: 5px solid #7b0a18; outline-offset: 1px; border-color: #fff; }
.t { font-family: "Open Sans", "Noto Sans CJK SC", sans-serif; }
.venn circle { mix-blend-mode: multiply; }
.scroll { width: 25px; display: flex; flex-direction: column; background: #f1f1f1; }
.sbtn { height: 25px; background: #fff; border: 2px solid #a3a3a3; font: 13px/20px "DejaVu Sans"; text-align: center; color: #222; flex: none; }
.sthumb { background: #fff; border: 2px solid #a3a3a3; border-top-width: 1px; flex: none; }
.left { margin: 3px 0 5px; }
.left .sthumb { height: 601px; }
.work { flex: 1; display: flex; flex-direction: column; }
.canvas { height: 1280px; display: flex; border-bottom: 2px solid #c6c6c6; }
.slide { position: relative; width: 2151px; height: 1211px; margin: 31px 297px 0 299px; background: linear-gradient(#192b72, #1b3587 5%, #2443a8 13%, #2c54c8 21%, #335fdf 30%, #3666ea 46%, #3565e9 53%, #3160e4 63%, #2c54c8 75%, #2342a4 87%, #1a3180 95%, #192b72); color: #fff; }
.slide h1 { margin: 0; padding: 393px 36px 0 0; text-align: center; font: 300 134px/158px "Noto Sans CJK SC", sans-serif; -webkit-text-stroke: .8px #fff; }
.slide h1 em { position: relative; top: -19px; font: 300 121px/140px "Open Sans"; -webkit-text-stroke: 2px #fff; }
.by { position: absolute; right: 358px; top: 953px; display: flex; flex-direction: column; align-items: center; font: 42.500px/76px "Noto Sans", "Open Sans"; color: #f2f6ff; }
.by span:last-child { margin-right: 3px; }
.cursor { position: absolute; left: 423px; top: 910px; }
.right { width: 24px; margin: 4px 0 33px; height: 1238px; }
.right .sthumb { height: 71px; }
.canvas .right .sbtn { width: 24px; }
.right > svg { background: #e6e6e6; }
.notes { display: flex; justify-content: space-between; padding: 7px 27px 0 19px; font-size: 25px; line-height: 38px; color: #555; }
.ime { display: flex; align-items: center; width: 119px; height: 36px; background: #fff; color: #000; gap: 10px; padding-left: 7px; }
.ime i { height: 32px; border-left: 3px dotted #bbb; }
.ime b { font: 700 18px "Liberation Mono"; }
.ime svg { margin-left: 3px; }

.status { height: 35px; flex: none; display: flex; align-items: center; background: #f3f3f2; border-top: 2px solid #d0d0d0; padding-bottom: 1px; }
.pg { width: 229px; margin-left: 18px; word-spacing: 1.800px; }
.st1 { margin: 0 27px 0 33px; }
.lang { width: 198px; }
.st2 { margin-right: 2px; }
.acc { font-weight: 500; color: #111; }
.st3 { margin-right: 7px; } .s3t { width: 72px; } .st4 { margin-right: 4px; } .s4t { width: 73px; }
.view { width: 66px; height: 33px; background: #cbcbcb; display: grid; place-items: center; margin-right: 9px; }

.taskbar { height: 67px; flex: none; display: flex; background: #091d2f; color: #eef3f7; border-top: 1px solid #04111e; }
.pins { margin-top: 3px; }
.task { width: 253px; margin-right: 15.200px; height: 66px; border-bottom: 4px solid #9fcbe8; display: flex; align-items: center; padding: 4px 0 0 10px; flex: none; overflow: hidden; }
.task span { margin-left: 7px; }
.chrome span { letter-spacing: .350px; }
.folder svg { margin: 0 1px 0 -3px; }
.tray { display: flex; align-items: center; margin-left: auto; width: 499px; padding-top: 2px; }
.sun { width: 34px; height: 34px; border-radius: 50%; background: linear-gradient(#f5b03c, #f07d18); margin-right: 17px; }
.temp { width: 66px; font-size: 22px; } .sunny { width: 82px; font-size: 23px; }
.clock { width: 109px; margin-left: 5px; text-align: center; display: flex; flex-direction: column; line-height: 29px; font-size: 20px; }
.bell { margin-left: 26px; }
.peek { margin-left: auto; margin-right: 7px; width: 1px; height: 66px; background: #51606e; }
.mark { position: absolute; left: 3187px; top: 1727px; font: 24.800px/32px "Noto Sans", "Noto Sans CJK SC", sans-serif; color: rgba(255, 255, 255, .78); text-shadow: 0 0 3px rgba(0, 0, 0, .7); }
</style>
